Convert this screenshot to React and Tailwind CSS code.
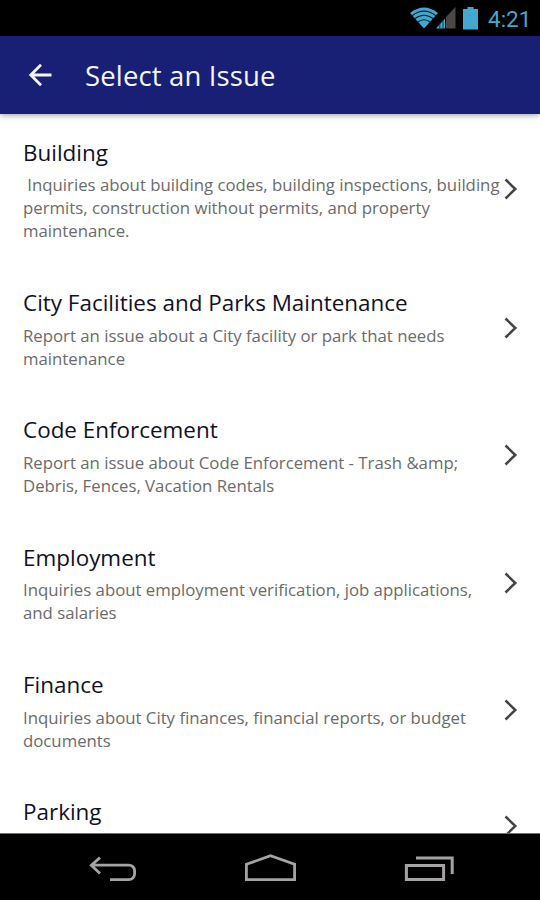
const issues = [
  {
    title: "Building",
    lines: [
      "\u00a0Inquiries about building codes, building inspections, building",
      "permits, construction without permits, and property",
      "maintenance.",
    ],
  },
  {
    title: "City Facilities and Parks Maintenance",
    lines: ["Report an issue about a City facility or park that needs", "maintenance"],
  },
  {
    title: "Code Enforcement",
    lines: ["Report an issue about Code Enforcement - Trash &amp;", "Debris, Fences, Vacation Rentals"],
  },
  {
    title: "Employment",
    lines: ["Inquiries about employment verification, job applications,", "and salaries"],
  },
  {
    title: "Finance",
    lines: ["Inquiries about City finances, financial reports, or budget", "documents"],
  },
  { title: "Parking", lines: [] },
];

function StatusBar() {
  return (
    <div className="flex h-9 shrink-0 items-center justify-end bg-black pr-[10px] text-[#43a8d0]">
      <svg className="h-[22px] w-[28px]" viewBox="0 0 28 22" fill="none">
        <path d="M0 6Q14-5 28 6L14 21.5Z" fill="currentColor" />
        <path
          d="M2 8.7Q14-.5 26 8.7M4.5 11.9Q14 4.6 23.5 11.9M7.5 15.2Q14 10.2 20.5 15.2"
          stroke="#08222d"
          strokeWidth="1.1"
        />
      </svg>
      <svg className="-ml-[3px] h-[22px] w-[21px]" viewBox="0 0 21 22">
        <path d="M20.5 0V21.5H11V10Z" fill="#4b4745" />
        <path d="M10 11.5V21.5H1Z" fill="currentColor" />
        <path d="M4.8 15V22M8 12V22" stroke="#08222d" strokeWidth="0.8" />
      </svg>
      <svg className="ml-[7px] h-[23px] w-[15px]" viewBox="0 0 15 23" fill="currentColor">
        <path d="M4.5 0H10.5V2H15V22.5H0V2H4.5Z" />
      </svg>
      <span className="ml-[10px] w-[42px] pt-px font-[Roboto,sans-serif] text-[22.5px] leading-8 whitespace-nowrap">
        4:21
      </span>
    </div>
  );
}

function Header() {
  return (
    <header className="z-10 flex h-[78px] shrink-0 items-center bg-[#172074] pl-7 text-[#f4f4fc] shadow-[0_1px_6px_rgba(0,0,0,0.4)]">
      <svg className="h-6 w-6" viewBox="0 0 24 24" fill="none" stroke="currentColor" strokeWidth="2.8">
        <path d="M23.5 12H3M13 1.8L2.8 12L13 22.2" />
      </svg>
      <h1 className="ml-[33px] pt-px text-[27.5px] leading-9 tracking-[0.005em] whitespace-nowrap">Select an Issue</h1>
    </header>
  );
}

function IssueRow({ title, lines }) {
  return (
    <li className="flex shrink-0 items-center pr-[22px] pl-[23px]">
      <div className="min-w-0 flex-1 pt-[22.6px] pb-[21.9px] whitespace-nowrap">
        <h2 className="text-[22.45px] leading-8 text-[#101126]">{title}</h2>
        <p className="min-h-[27.67px] pt-[4.5px] text-[16.78px] leading-[23.17px] text-[#6b6b6b]">
          {lines.map((line) => (
            <span key={line} className="block">
              {line}
            </span>
          ))}
        </p>
      </div>
      <svg className="h-[22px] w-[14px] shrink-0" viewBox="0 0 14 22" fill="none" stroke="#444" strokeWidth="2.5">
        <path d="M1.5 1.5L11.3 11L1.5 20.5" />
      </svg>
    </li>
  );
}

function NavBar() {
  return (
    <nav className="flex h-[67px] shrink-0 items-center justify-between border-t border-[#6e6e6e] bg-black pt-0.5 pr-[86px] pl-[88px] text-[#a5a2a3]">
      <svg className="h-[28px] w-[48px]" viewBox="0 0 48 28" fill="none" stroke="currentColor" strokeWidth="2.8">
        <path d="M3 11.2H40.5Q46.7 11.2 46.7 18.4Q46.7 25.6 40.5 25.6H22M12 3.6L3.3 11.2L12 19.4" />
      </svg>
      <svg className="h-[28px] w-[52px]" viewBox="0 0 52 28" fill="none" stroke="currentColor" strokeWidth="2.8">
        <path d="M2.4 25.7V10.3L26.5 1.8L50.6 10.3V25.7Z" />
      </svg>
      <svg className="h-[28px] w-[50px]" viewBox="0 0 50 28" fill="none" stroke="currentColor" strokeWidth="3">
        <path d="M2.4 11.4H39.6V25.6H2.4ZM12 4H48.2V20" />
      </svg>
    </nav>
  );
}

export default function App() {
  return (
    <div className="flex h-[900px] w-[540px] flex-col overflow-hidden bg-white font-['Open_Sans',sans-serif]">
      <StatusBar />
      <Header />
      <ul className="flex min-h-0 flex-1 flex-col overflow-hidden">
        {issues.map((issue) => (
          <IssueRow key={issue.title} {...issue} />
        ))}
      </ul>
      <NavBar />
    </div>
  );
}
